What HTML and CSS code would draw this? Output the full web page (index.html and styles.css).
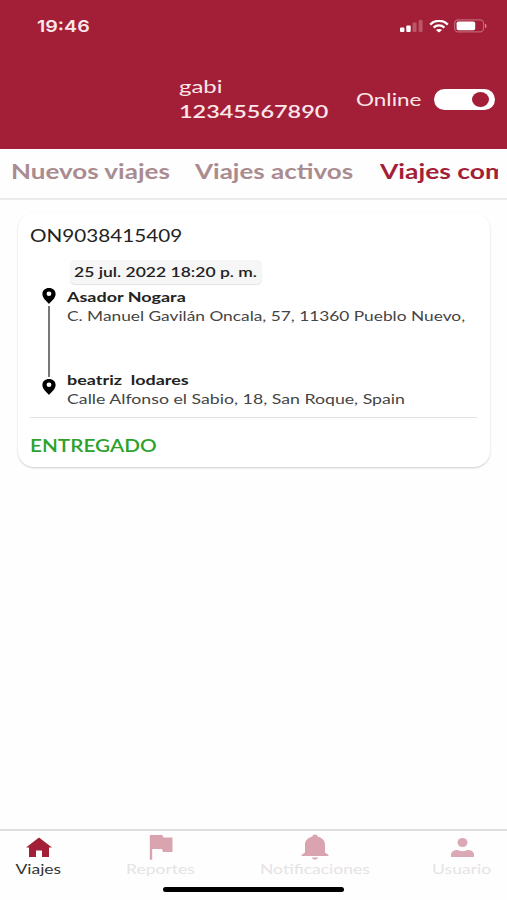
FILE: index.html
```
<!DOCTYPE html>
<html lang="es">
<head>
    <meta charset="UTF-8">
    <meta name="viewport" content="width=device-width, initial-scale=1.0">
    <title>Viajes</title>
    <link rel="stylesheet" href="styles.css">
</head>
<body>
    <div class="app">
        <header class="header">
            <div class="status-bar">
                <span class="time wide">19:46</span>
                <div class="status-icons">
                    <svg width="24" height="13" viewBox="0 0 24 13">
                        <rect x="0" y="7.5" width="4.4" height="4.5" rx="1" fill="#fff"/>
                        <rect x="6.3" y="5.5" width="4.4" height="6.5" rx="1" fill="#fff"/>
                        <rect x="12.6" y="2.5" width="4" height="9.5" rx="1" fill="#bb5769"/>
                        <rect x="18.6" y="0" width="4" height="12" rx="1" fill="#bb5769"/>
                    </svg>
                    <svg class="wifi" width="20" height="13" viewBox="0 0 20 13" fill="none" stroke="#fff">
                        <path d="M1.2 4.6C6-.4 14-.4 18.8 4.6" stroke-width="2.3"/>
                        <path d="M4.6 7.6c3-2.9 7.8-2.9 10.8 0" stroke-width="2.2"/>
                        <path d="M10 12.6 6.9 10c1.8-1.5 4.4-1.5 6.2 0z" fill="#fff" stroke="none"/>
                    </svg>
                    <svg class="battery" width="33" height="14" viewBox="0 0 33 14">
                        <rect x=".6" y=".9" width="29" height="12" rx="3.6" fill="none" stroke="#c26476" stroke-width="1.2"/>
                        <rect x="2.6" y="2.5" width="18.6" height="8.8" rx="1.8" fill="#fff"/>
                        <path d="M31 4.8c2 .6 2 3.8 0 4.4z" fill="#d08795"/>
                    </svg>
                </div>
            </div>
            <div class="driver">
                <div class="driver-info">
                    <span class="driver-name wide">gabi</span>
                    <span class="driver-phone wide">12345567890</span>
                </div>
                <span class="online wide">Online</span>
                <div class="toggle"><div class="knob"></div></div>
            </div>
        </header>

        <nav class="tabs">
            <div class="tab"><span class="wide">Nuevos viajes</span></div>
            <div class="tab"><span class="wide">Viajes activos</span></div>
            <div class="tab active"><span class="wide">Viajes completados</span></div>
        </nav>

        <main class="content">
            <div class="card">
                <div class="order"><span class="wide">ON9038415409</span></div>
                <div class="date"><span class="wide">25 jul. 2022 18:20 p. m.</span></div>
                <div class="route">
                    <div class="route-line">
                        <svg width="14" height="16" viewBox="0 0 14 16">
                            <path fill-rule="evenodd" d="M7 0C3.1 0 .4 2.5.4 6c0 3.9 4 7.2 6.6 9.9C9.6 13.2 13.6 9.9 13.6 6 13.6 2.5 10.9 0 7 0zM7 3.6a2.4 2.2 0 1 1 0 4.4 2.4 2.2 0 0 1 0-4.4z"/>
                        </svg>
                        <div class="line"></div>
                        <svg width="14" height="16" viewBox="0 0 14 16">
                            <path fill-rule="evenodd" d="M7 0C3.1 0 .4 2.5.4 6c0 3.9 4 7.2 6.6 9.9C9.6 13.2 13.6 9.9 13.6 6 13.6 2.5 10.9 0 7 0zM7 3.6a2.4 2.2 0 1 1 0 4.4 2.4 2.2 0 0 1 0-4.4z"/>
                        </svg>
                    </div>
                    <div class="stops">
                        <div class="stop">
                            <span class="stop-name wide">Asador Nogara</span>
                            <span class="stop-address pickup wide">C. Manuel Gavilán Oncala, 57, 11360 Pueblo Nuevo,</span>
                        </div>
                        <div class="stop">
                            <span class="stop-name wide">beatriz&nbsp; lodares</span>
                            <span class="stop-address wide">Calle Alfonso el Sabio, 18, San Roque, Spain</span>
                        </div>
                    </div>
                </div>
                <div class="state"><span class="wide">ENTREGADO</span></div>
            </div>
        </main>

        <footer class="bottom-nav">
            <div class="nav-items">
                <div class="nav-item selected">
                    <svg width="26" height="26" viewBox="0 0 26 26">
                        <path fill="#a31f37" d="M13 3.5 26 13.5h-3V23h-7v-6.500h-6V23H3v-9.500H0z"/>
                    </svg>
                    <span class="wide">Viajes</span>
                </div>
                <div class="nav-item">
                    <svg width="24" height="26" viewBox="0 0 24 26">
                        <path fill="#d9a4b0" d="M.8 1h12.500l1 2.500h9.200V18H14l-1-3H3.200v10.700H.8z"/>
                    </svg>
                    <span class="wide">Reportes</span>
                </div>
                <div class="nav-item">
                    <svg width="28" height="26" viewBox="0 0 28 26">
                        <path fill="#d9a4b0" d="M14 .500c1.700 0 2.500.8 2.500 2 4.600 1 7.500 4.300 7.500 8V18.500l3.500 2.500v1H.5v-1L4 18.500v-8c0-3.700 2.900-7 7.500-8 0-1.200.8-2 2.500-2zM11 23.500h6c-.4 1.400-1.600 2-3 2s-2.600-.6-3-2z"/>
                    </svg>
                    <span class="wide">Notificaciones</span>
                </div>
                <div class="nav-item">
                    <svg width="24" height="26" viewBox="0 0 24 26">
                        <ellipse cx="12.5" cy="8.5" rx="5" ry="4.5" fill="#dba9b5"/>
                        <path fill="#dba9b5" d="M1 23v-2c0-4 3.500-5 6.500-5 2 1.500 8 1.500 10 0 3 0 6.500 1 6.500 5v2z"/>
                    </svg>
                    <span class="wide">Usuario</span>
                </div>
            </div>
            <div class="home-indicator"></div>
        </footer>
    </div>
</body>
</html>
```
FILE: styles.css
```
* {
    box-sizing: border-box;
    margin: 0;
    padding: 0;
}

body {
    background-color: #fefefe;
    font-family: Lato, "Open Sans", sans-serif;
    color: #222;
}

.app {
    width: 507px;
    height: 900px;
    display: flex;
    flex-direction: column;
    overflow: hidden;
}

svg {
    display: block;
}

/* extended lettering */
.wide {
    display: inline-block;
    white-space: nowrap;
    transform: scaleX(1.25);
    transform-origin: left center;
}

.header {
    height: 149px;
    background: #a31f37;
    color: #fbe6ea;
}

.status-bar {
    height: 52px;
    padding: 0 20px 0 37px;
    display: flex;
    align-items: center;
    justify-content: space-between;
}

.time {
    font-family: Inter, sans-serif;
    font-size: 16.5px;
    font-weight: 600;
    transform: scaleX(1.19);
}

.status-icons {
    display: flex;
    align-items: center;
}

.wifi {
    margin-left: 5px;
}

.battery {
    margin-left: 5px;
}

.driver {
    height: 94px;
    display: flex;
    align-items: center;
    padding-left: 179px;
}

.driver-info {
    width: 177px;
    display: flex;
    flex-direction: column;
    align-items: flex-start;
}

.driver-name {
    font-size: 18px;
    line-height: 24px;
    transform: scaleX(1.33);
}

.driver-phone {
    font-size: 18px;
    line-height: 26px;
    font-weight: 600;
    transform: scaleX(1.3);
}

.online {
    width: 78px;
    font-size: 18px;
}

.toggle {
    width: 61px;
    height: 21px;
    padding: 3px 6px;
    border-radius: 11px;
    background: #fff;
    display: flex;
    justify-content: flex-end;
}

.knob {
    width: 17px;
    height: 15px;
    border-radius: 50%;
    background: #a31f37;
}

.tabs {
    height: 51px;
    padding: 0 9px 0 11px;
    border-bottom: 2px solid #ebebeb;
    display: flex;
    align-items: center;
    font-size: 20px;
    font-weight: 700;
    color: #aa8b90;
}

.tab {
    flex: 0 0 184px;
    height: 45px;
    line-height: 41px;
}

.tab .wide {
    transform: scaleX(1.3);
}

.tab.active {
    flex: 0 0 118px;
    margin-left: 1px;
    overflow: hidden;
    color: #a31f37;
}

.tab.active .wide {
    transform: scaleX(1.32);
}

.content {
    flex: 1;
    padding: 13px 17px 0 18px;
}

.card {
    height: 254px;
    padding: 10px 13px 0 12px;
    border-radius: 16px;
    background: #fff;
    box-shadow: 0 1px 2px rgba(0, 0, 0, 0.2);
}

.order {
    height: 37px;
    font-size: 17px;
    line-height: 26px;
}

.order .wide {
    transform: scaleX(1.215);
}

.date {
    width: 192px;
    height: 24px;
    margin-left: 40px;
    padding-left: 4px;
    border-radius: 5px;
    background: #f6f6f6;
    box-shadow: 0 1px 1px rgba(0, 0, 0, 0.12);
    font-size: 14px;
    line-height: 24px;
    font-weight: 600;
}

.route {
    height: 134px;
    padding: 4px 0 0 11px;
    border-bottom: 1px solid #e2e2e2;
    display: flex;
}

.route-line {
    width: 15px;
    margin-right: 11px;
    display: flex;
    flex-direction: column;
    align-items: flex-end;
}

.line {
    width: 2px;
    height: 71px;
    margin: 2px 6px 2px 0;
    background: #777;
}

.stop {
    height: 83px;
    display: flex;
    flex-direction: column;
    align-items: flex-start;
    line-height: 19px;
}

.stop-name {
    font-size: 13.5px;
    font-weight: 700;
    transform: scaleX(1.33);
}

.stop-address {
    margin-top: -1px;
    font-size: 14px;
    color: #444;
    transform: scaleX(1.265);
}

.stop-address.pickup {
    transform: scaleX(1.237);
}

.state {
    padding-top: 16px;
    font-size: 17px;
    line-height: 24px;
    font-weight: 600;
    color: #2ca22c;
}

.state .wide {
    transform: scaleX(1.22);
}

.bottom-nav {
    height: 71px;
    border-top: 2px solid #dedede;
}

.nav-items {
    height: 56px;
    padding-top: 3px;
    display: grid;
    grid-template-columns: 77px 168px 139px 156px;
}

.nav-item {
    display: flex;
    flex-direction: column;
    align-items: center;
    font-size: 14px;
    line-height: 17px;
    color: #e6e3e4;
}

.nav-item .wide {
    transform-origin: center;
}

.nav-item.selected {
    color: #333;
}

.home-indicator {
    width: 181px;
    height: 5px;
    margin-left: 163px;
    border-radius: 3px;
    background: #000;
}
```
